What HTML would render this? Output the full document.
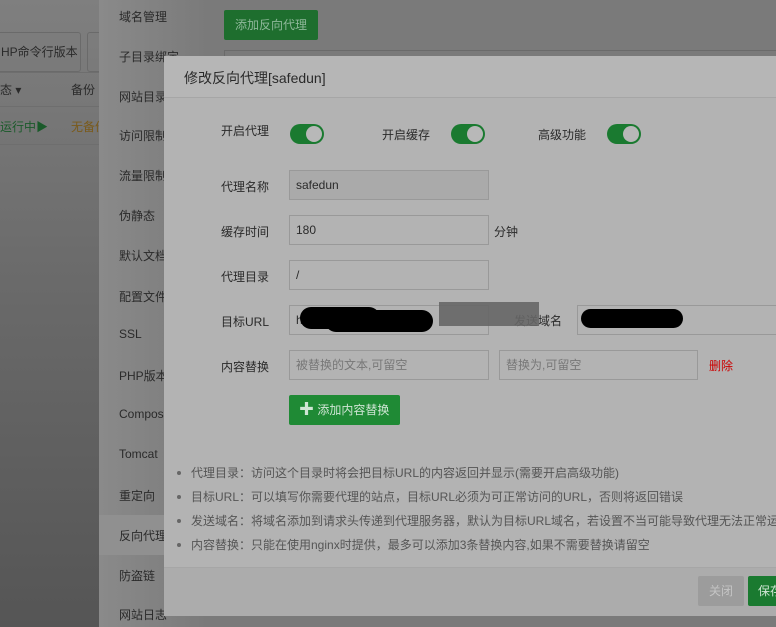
<!DOCTYPE html>
<html><head><meta charset="utf-8"><style>
*{margin:0;padding:0;box-sizing:border-box}
body{width:776px;height:627px;overflow:hidden;position:relative;font-family:"Liberation Sans","Noto Sans CJK SC",sans-serif;font-size:12px;color:#2a2a2a;background:linear-gradient(#7f7f7f,#6a6a6a 45%,#555)}
.a{position:absolute;white-space:nowrap}
.side{position:absolute;left:99px;top:0;width:109px;height:627px;background:linear-gradient(90deg,#8a8a8a,#7a7a7a)}
.side div{position:absolute;left:20px;font-size:12px;color:#2a2a2a}
.main{position:absolute;left:208px;top:0;width:568px;height:627px;background:#7a7a7a}
.dlg{position:absolute;left:164px;top:56px;width:620px;height:560px;background:#b3b3b3}
.sw{position:absolute;width:34px;height:20px;border-radius:10px;background:#1a7a30}
.sw:after{content:"";position:absolute;right:2px;top:2px;width:16px;height:16px;border-radius:50%;background:#b8b8b8}
.in{position:absolute;height:30px;border:1px solid #999;background:#b3b3b3;padding-left:6px;line-height:28px;font-size:12px}
.lb{position:absolute;font-size:12px;white-space:nowrap}
.ph{color:#777}
.note{position:absolute;left:191px;font-size:12px;color:#555;white-space:nowrap}
.note:before{content:"";position:absolute;left:-14px;top:7px;width:4px;height:4px;border-radius:50%;background:#666}
</style></head><body>
<div class="a" style="left:-10px;top:32px;width:91px;height:40px;border:1px solid #6a6a6a;border-radius:3px;padding:10px;color:#2a2a2a">HP命令行版本</div>
<div class="a" style="left:87px;top:32px;width:20px;height:40px;border:1px solid #6a6a6a;border-radius:3px"></div>
<div class="a" style="left:0;top:72px;width:99px;border-top:1px solid #6e6e6e;border-bottom:1px solid #6e6e6e;height:35px"></div>
<div class="a" style="left:0;top:81px">态 ▾</div>
<div class="a" style="left:71px;top:81px">备份</div>
<div class="a" style="left:0;top:118px;color:#1a5a2a">运行中▶</div>
<div class="a" style="left:71px;top:118px;color:#7a5a1a">无备份</div>
<div class="a" style="left:0;top:144px;width:99px;border-top:1px solid #6e6e6e"></div>
<div class="side">
<div style="top:8px">域名管理</div><div style="top:48px">子目录绑定</div><div style="top:88px">网站目录</div><div style="top:127px">访问限制</div><div style="top:167px">流量限制</div><div style="top:207px">伪静态</div><div style="top:247px">默认文档</div><div style="top:288px">配置文件</div><div style="top:327px">SSL</div><div style="top:367px">PHP版本</div><div style="top:407px">Composer</div><div style="top:447px">Tomcat</div><div style="top:487px">重定向</div>
<div style="top:515px;left:0;width:109px;height:40px;background:#909090"></div>
<div style="top:527px">反向代理</div><div style="top:567px">防盗链</div><div style="top:606px">网站日志</div>
</div>
<div class="main"></div>
<div class="a" style="left:224px;top:10px;width:94px;height:30px;background:#1e6e2e;border-radius:2px;color:#8fb89a;font-size:12px;line-height:30px;text-align:center">添加反向代理</div>
<div class="a" style="left:224px;top:50px;width:560px;height:10px;border:1px solid #6a6a6a;background:#7a7a7a"></div>
<div class="dlg">
<div style="height:42px;border-bottom:1px solid #a6a6a6;background:#b6b6b6;padding:12px 20px;font-size:14px;color:#2a2a2a">修改反向代理[safedun]</div>
<div style="position:absolute;left:0;top:511px;width:620px;height:49px;border-top:1px solid #a6a6a6;background:#acacac"></div>
</div>
<div class="lb" style="left:221px;top:122px">开启代理</div><div class="sw" style="left:290px;top:124px"></div>
<div class="lb" style="left:382px;top:126px">开启缓存</div><div class="sw" style="left:451px;top:124px"></div>
<div class="lb" style="left:538px;top:126px">高级功能</div><div class="sw" style="left:607px;top:124px"></div>
<div class="lb" style="left:221px;top:178px">代理名称</div><div class="in" style="left:289px;top:170px;width:200px;background:#aaa">safedun</div>
<div class="lb" style="left:221px;top:223px">缓存时间</div><div class="in" style="left:289px;top:215px;width:200px">180</div><div class="lb" style="left:494px;top:223px">分钟</div>
<div class="lb" style="left:221px;top:268px">代理目录</div><div class="in" style="left:289px;top:260px;width:200px">/</div>
<div class="lb" style="left:221px;top:313px">目标URL</div><div class="in" style="left:289px;top:305px;width:200px">ht</div>
<div class="lb" style="left:514px;top:312px">发送域名</div><div class="in" style="left:577px;top:305px;width:210px"></div>
<div class="a" style="left:300px;top:307px;width:80px;height:22px;border-radius:11px;background:#000"></div>
<div class="a" style="left:325px;top:310px;width:108px;height:22px;border-radius:11px;background:#000"></div>
<div class="a" style="left:439px;top:302px;width:100px;height:24px;background:#666;opacity:.9"></div>
<div class="a" style="left:581px;top:309px;width:102px;height:19px;border-radius:10px;background:#000"></div>
<div class="lb" style="left:221px;top:358px">内容替换</div>
<div class="in ph" style="left:289px;top:350px;width:200px">被替换的文本,可留空</div>
<div class="in ph" style="left:499px;top:350px;width:199px">替换为,可留空</div>
<div class="lb" style="left:709px;top:357px;color:#c00">删除</div>
<div class="a" style="left:289px;top:395px;width:111px;height:30px;background:#1f8a35;border-radius:2px;color:#cfe5d4;line-height:30px;padding-left:10px"><b style="font-size:15px">✚</b> 添加内容替换</div>
<div class="note" style="top:464px">代理目录：访问这个目录时将会把目标URL的内容返回并显示(需要开启高级功能)</div>
<div class="note" style="top:488px">目标URL：可以填写你需要代理的站点，目标URL必须为可正常访问的URL，否则将返回错误</div>
<div class="note" style="top:512px">发送域名：将域名添加到请求头传递到代理服务器，默认为目标URL域名，若设置不当可能导致代理无法正常运行</div>
<div class="note" style="top:536px">内容替换：只能在使用nginx时提供，最多可以添加3条替换内容,如果不需要替换请留空</div>
<div class="a" style="left:698px;top:576px;width:46px;height:30px;background:#9c9c9c;border-radius:2px;color:#c4c4c4;text-align:center;line-height:30px">关闭</div>
<div class="a" style="left:748px;top:576px;width:40px;height:30px;background:#1a7a30;border-radius:2px;color:#cfe5d4;line-height:30px;padding-left:10px">保存</div>
</body></html>
